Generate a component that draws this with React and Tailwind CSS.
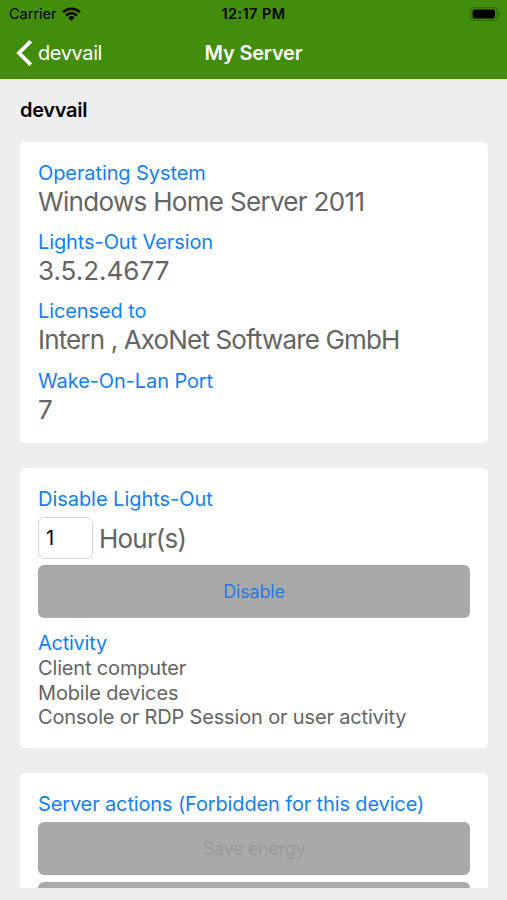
function Label({ children, className = "tracking-[-0.1px]" }) {
  return (
    <div className={`h-[25px] text-[20px] leading-[25px] text-[#1380f2] whitespace-nowrap ${className}`}>
      {children}
    </div>
  );
}

function Field({ label, value, valueClass = "" }) {
  return (
    <div className="h-[69.2px]">
      <Label>{label}</Label>
      <div className={`h-8 text-[26px] leading-8 text-[#646464] whitespace-nowrap ${valueClass}`}>{value}</div>
    </div>
  );
}

function StatusBar() {
  return (
    <div className="grid h-[27px] grid-cols-3 items-center text-black">
      <div className="flex items-center gap-[5px] pl-[9px]">
        <span className="pt-px text-[14.5px] leading-none">Carrier</span>
        <svg width="19" height="14" viewBox="0 0 19 14" fill="none" stroke="currentColor" strokeWidth="2.5">
          <path d="M1.1 5.2a12 12 0 0 1 16.8 0" />
          <path d="M4.1 8.5a7.7 7.7 0 0 1 10.8 0" />
          <path d="M9.5 13.8 6.4 10.5a4.5 4.5 0 0 1 6.2 0z" fill="currentColor" stroke="none" />
        </svg>
      </div>
      <span className="pt-[2px] text-center text-[14.5px] font-semibold leading-none tracking-[0.4px]">12:17 PM</span>
      <svg className="mr-[6px] justify-self-end" width="31" height="14" viewBox="0 0 31 14">
        <rect x="0.7" y="0.7" width="26.6" height="12.6" rx="3.4" fill="none" stroke="#2f6a0b" strokeWidth="1.2" />
        <rect x="2.6" y="2.6" width="22.4" height="8.8" rx="1.8" fill="#000" />
        <path d="M28.7 4.8q1.7.7 1.7 2.2t-1.7 2.2z" fill="#2f6a0b" />
      </svg>
    </div>
  );
}

function NavBar() {
  return (
    <div className="grid h-[51px] grid-cols-3 items-center text-white">
      <div className="flex items-center gap-[6px] pl-[16px]">
        <svg width="16" height="26" viewBox="0 0 16 26" fill="none" stroke="currentColor" strokeWidth="3.8">
          <path d="M14.7 1.3 3 13l11.7 11.7" />
        </svg>
        <span className="text-[20px] leading-none tracking-[-0.4px]">devvail</span>
      </div>
      <span className="text-center text-[20px] font-semibold leading-none tracking-[-0.2px]">My Server</span>
    </div>
  );
}

export default function App() {
  return (
    <div className="flex h-[900px] w-[507px] flex-col overflow-hidden bg-[#eeeeee] font-['Inter','Liberation_Sans',sans-serif]">
      <header className="h-[79px] shrink-0 bg-[#438d0c]">
        <StatusBar />
        <NavBar />
      </header>
      <main className="h-[809px] overflow-hidden pl-[20px] pr-[19px]">
        <h1 className="mt-[18px] h-[26px] text-[20px] font-semibold leading-[26px] tracking-[-0.3px] text-black">devvail</h1>

        <section className="mt-[19px] h-[301px] rounded-[5px] bg-white px-[18px] pt-[19px]">
          <Field label="Operating System" value="Windows Home Server 2011" valueClass="tracking-[-0.68px]" />
          <Field label="Lights-Out Version" value="3.5.2.4677" />
          <Field label="Licensed to" value="Intern , AxoNet Software GmbH" valueClass="tracking-[-0.85px]" />
          <Field label="Wake-On-Lan Port" value="7" />
        </section>

        <section className="mt-[25px] h-[280px] rounded-[5px] bg-white px-[18px] pt-[19px]">
          <Label className="tracking-[-0.04px]">Disable Lights-Out</Label>
          <div className="mt-[5px] flex h-[42px] items-center">
            <input
              className="h-[42px] w-[55px] rounded-[6px] border-[1.5px] border-[#d6d6d6] bg-white pl-[7px] text-[20px] text-black outline-none"
              defaultValue="1"
            />
            <span className="ml-[6px] pt-px text-[26px] leading-8 tracking-[-0.8px] text-[#646464]">Hour(s)</span>
          </div>
          <button className="mt-[6px] block h-[53px] w-full rounded-[6px] bg-[#a9a9a9] text-[18px] tracking-[-0.2px] text-[#1f7ce0]">
            Disable
          </button>
          <div className="mt-[13px]">
            <Label className="tracking-[-0.25px]">Activity</Label>
          </div>
          <div className="text-[20px] leading-[24.7px] tracking-[-0.16px] text-[#646464] whitespace-nowrap">
            <div>Client computer</div>
            <div>Mobile devices</div>
            <div>Console or RDP Session or user activity</div>
          </div>
        </section>

        <section className="mt-[25px] h-[300px] rounded-[5px] bg-white px-[18px] pt-[19px]">
          <Label className="tracking-[-0.14px]">Server actions (Forbidden for this device)</Label>
          <button className="mt-[5px] block h-[53px] w-full rounded-[6px] bg-[#a9a9a9] text-[18px] tracking-[-0.3px] text-[#999999]">
            Save energy
          </button>
          <button className="mt-[7px] block h-[53px] w-full rounded-[6px] bg-[#a9a9a9]" />
        </section>
      </main>
    </div>
  );
}
